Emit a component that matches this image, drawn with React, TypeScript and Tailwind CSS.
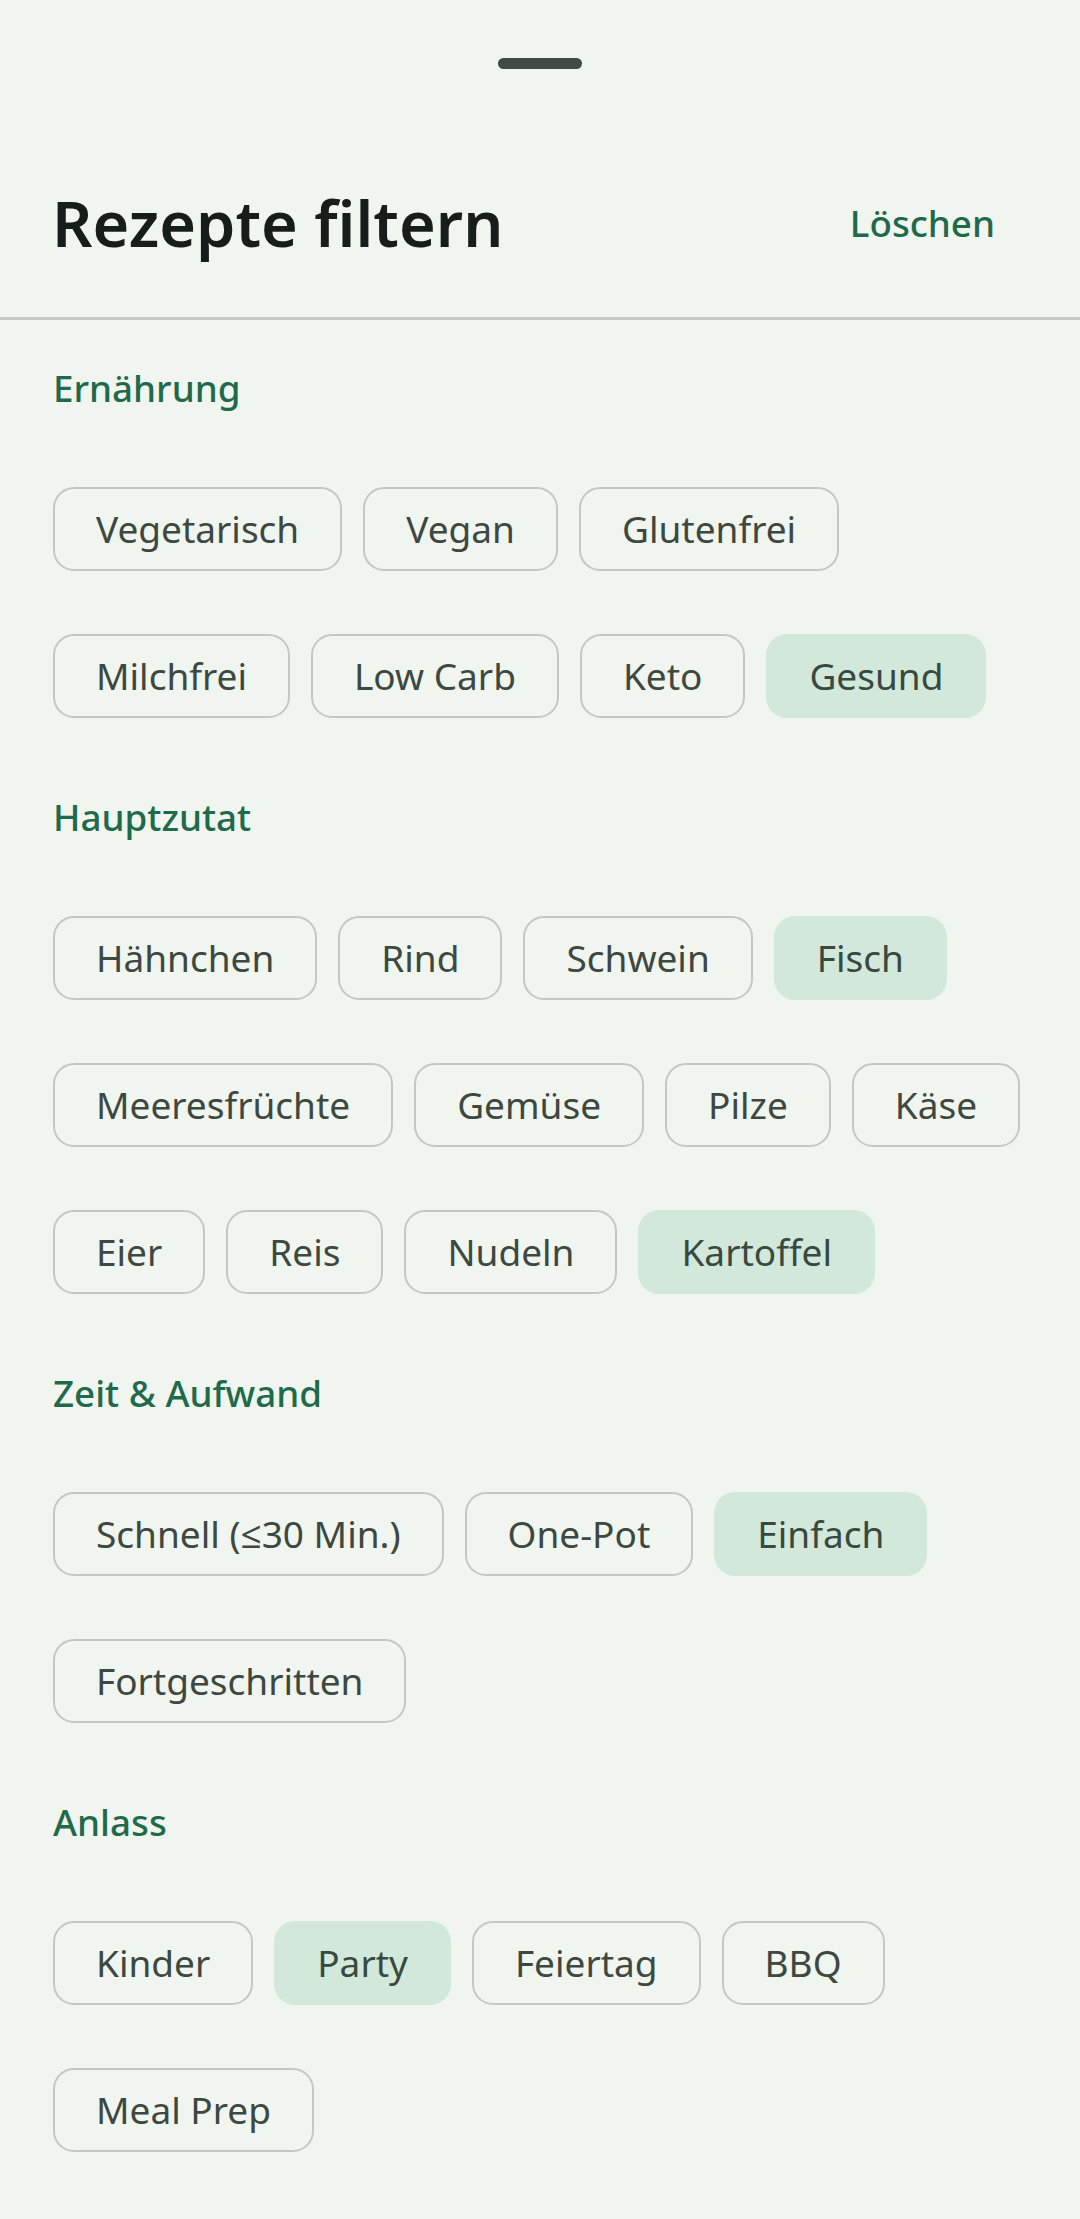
import { useState } from "react";

type Section = { title: string; items: string[] };

const sections: Section[] = [
  {
    title: "Ernährung",
    items: ["Vegetarisch", "Vegan", "Glutenfrei", "Milchfrei", "Low Carb", "Keto", "Gesund"],
  },
  {
    title: "Hauptzutat",
    items: [
      "Hähnchen",
      "Rind",
      "Schwein",
      "Fisch",
      "Meeresfrüchte",
      "Gemüse",
      "Pilze",
      "Käse",
      "Eier",
      "Reis",
      "Nudeln",
      "Kartoffel",
    ],
  },
  {
    title: "Zeit & Aufwand",
    items: ["Schnell (≤30 Min.)", "One-Pot", "Einfach", "Fortgeschritten"],
  },
  {
    title: "Anlass",
    items: ["Kinder", "Party", "Feiertag", "BBQ", "Meal Prep"],
  },
];

const initialSelected = ["Gesund", "Fisch", "Kartoffel", "Einfach", "Party"];

function Chip({ label, active, onClick }: { label: string; active: boolean; onClick: () => void }) {
  return (
    <button
      onClick={onClick}
      className={
        active
          ? "h-[84px] rounded-[21px] border-[2.6px] border-transparent bg-[#d1e8db] px-[41px] text-[37px] font-normal leading-none text-[#39493f]"
          : "h-[84px] rounded-[21px] border-[2.6px] border-[#c3c8c2] px-[41px] text-[37px] font-normal leading-none text-[#3d4841]"
      }
    >
      {label}
    </button>
  );
}

export default function App() {
  const [selected, setSelected] = useState<string[]>(initialSelected);

  function toggle(item: string) {
    setSelected((prev) => (prev.includes(item) ? prev.filter((x) => x !== item) : [...prev, item]));
  }

  return (
    <div
      className="min-h-[2219px] w-[1080px] bg-[#f0f5ef]"
      style={{ fontFamily: '"Noto Sans", "Open Sans", sans-serif' }}
    >
      <div className="flex justify-center pt-[58px]">
        <div className="h-[11px] w-[84px] rounded-full bg-[#424a44]" />
      </div>

      <div className="mt-[111px] flex items-center justify-between pl-[52px] pr-[85px]">
        <h1 className="text-[63px] font-semibold leading-[86px] text-[#171d19]">Rezepte filtern</h1>
        <button onClick={() => setSelected([])} className="text-[36.75px] font-medium leading-[50px] text-[#1f6a4a]">
          Löschen
        </button>
      </div>

      <div className="mt-[51px] h-[2.6px] bg-[#c6cac5]" />

      <div className="pl-[53px] pr-[30px] pt-[42px]">
        {sections.map((s, i) => (
          <div key={s.title} className={i > 0 ? "mt-[73px]" : ""}>
            <h2 className="text-[36.75px] font-medium leading-[52px] text-[#1f6a4a]">{s.title}</h2>
            <div className="mt-[73px] flex flex-wrap gap-x-[21px] gap-y-[63px]">
              {s.items.map((item) => (
                <Chip key={item} label={item} active={selected.includes(item)} onClick={() => toggle(item)} />
              ))}
            </div>
          </div>
        ))}
      </div>
    </div>
  );
}
